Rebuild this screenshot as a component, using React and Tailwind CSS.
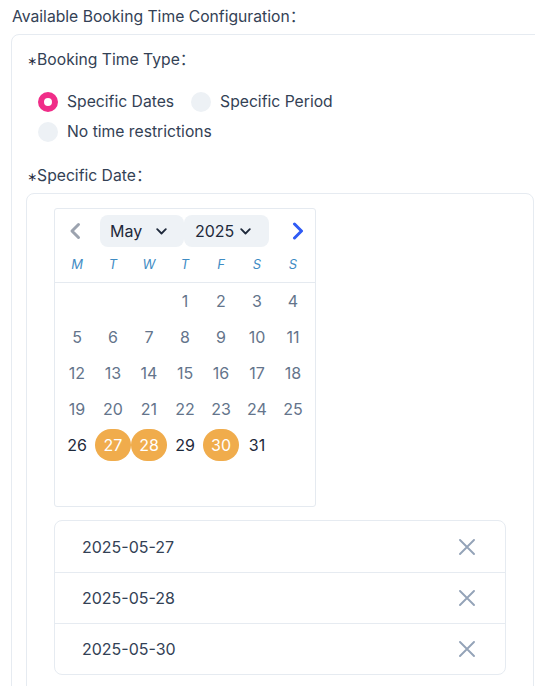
import React from 'react';

const font = { fontFamily: 'Inter, "Noto Sans CJK SC", sans-serif' };

const weeks = [
  [null, null, null, 1, 2, 3, 4],
  [5, 6, 7, 8, 9, 10, 11],
  [12, 13, 14, 15, 16, 17, 18],
  [19, 20, 21, 22, 23, 24, 25],
  [26, 27, 28, 29, 30, 31, null],
  [null, null, null, null, null, null, null],
];

const picked = [27, 28, 30];

const Chevron = ({ dir, className }) => (
  <svg width="12" height="18" viewBox="0 0 12 18" className={className}>
    <path
      d={dir === 'left' ? 'M9.5 2.5 L3 9 L9.5 15.5' : 'M2.5 2 L9.5 9 L2.5 16'}
      fill="none"
      stroke="currentColor"
      strokeWidth="3"
      strokeLinecap="round"
      strokeLinejoin="round"
    />
  </svg>
);

const Caret = () => (
  <svg width="11" height="7" viewBox="0 0 11 7" className="text-[#1e293b]">
    <path d="M1.2 1.2 L5.5 5.5 L9.8 1.2" fill="none" stroke="currentColor" strokeWidth="1.8" strokeLinecap="round" strokeLinejoin="round" />
  </svg>
);

const Close = () => (
  <svg width="16" height="16" viewBox="0 0 16 16" className="text-[#94a3b8]">
    <path d="M1 1 L15 15 M15 1 L1 15" stroke="currentColor" strokeWidth="1.9" strokeLinecap="round" />
  </svg>
);

const Star = () => (
  <span className="font-['DejaVu_Sans'] text-[12px] text-[#1e293b]">∗</span>
);

const Radio = ({ checked, label }) => (
  <label className="flex items-center gap-[9px] h-[30px]">
    {checked ? (
      <span className="w-5 h-5 rounded-full border-[6px] border-[#f02d88] bg-white" />
    ) : (
      <span className="w-5 h-5 rounded-full bg-[#edf1f5]" />
    )}
    <span className="text-[15.7px] text-[#334155]">{label}</span>
  </label>
);

const Calendar = () => (
  <div className="w-[262px] border border-[#e5eaf0] rounded-[3px] px-[4px] pt-[6px] pb-[7px]">
    <div className="flex items-center h-[32px]">
      <div className="w-[41px] pl-[10px] flex">
        <Chevron dir="left" className="text-[#9ca3af]" />
      </div>
      <div className="w-[84px] h-[32px] rounded-[8px] bg-[#eef2f6] flex items-center pl-[10px] pr-[17px] text-[16px] text-[#1e293b]">
        <span>May</span>
        <span className="ml-auto flex"><Caret /></span>
      </div>
      <div className="w-[85px] h-[32px] rounded-[8px] bg-[#eef2f6] flex items-center pl-[11px] pr-[18px] text-[16px] text-[#1e293b]">
        <span>2025</span>
        <span className="ml-auto flex"><Caret /></span>
      </div>
      <div className="ml-[23px] flex">
        <Chevron dir="right" className="text-[#2f5bf5]" />
      </div>
    </div>
    <div className="grid grid-cols-7 h-[35px] items-center">
      {['M', 'T', 'W', 'T', 'F', 'S', 'S'].map((d, i) => (
        <span key={i} className="text-center italic text-[13px] text-[#3f8cc4]">{d}</span>
      ))}
    </div>
    <div className="border-t border-[#e5eaf0] -mx-[4px] px-[4px]">
      {weeks.map((w, wi) => (
        <div key={wi} className="grid grid-cols-7 h-[36px] items-center">
          {w.map((d, di) => {
            if (d === null) return <span key={di} />;
            const sel = picked.includes(d);
            if (sel) {
              return (
                <span key={di} className="h-[32px] rounded-full bg-[#f0ac4c] text-white flex items-center justify-center text-[16px]">
                  {d}
                </span>
              );
            }
            return (
              <span key={di} className={`text-center text-[16px] ${wi === 4 ? 'text-[#1e293b]' : 'text-[#64748b]'}`}>
                {d}
              </span>
            );
          })}
        </div>
      ))}
    </div>
  </div>
);

export default function App() {
  return (
    <div className="w-[535px] h-[686px] overflow-hidden bg-white" style={font}>
      <div className="pl-[12px] pt-[6px] h-[34px] text-[15.7px] text-[#334155] leading-[22px]">
        Available Booking Time Configuration：
      </div>
      <div className="ml-[11px] w-[560px] border border-[#e6ebf1] rounded-[8px] pl-[15px] pt-[14px]">
        <div className="text-[15.7px] text-[#334155] leading-[22px]">
          <Star />Booking Time Type：
        </div>
        <div className="pl-[11px] mt-[15px]">
          <div className="flex gap-[17px]">
            <Radio checked label="Specific Dates" />
            <Radio label="Specific Period" />
          </div>
          <Radio label="No time restrictions" />
        </div>
        <div className="mt-[18px] text-[15.7px] text-[#334155] leading-[22px]">
          <Star />Specific Date：
        </div>
        <div className="mt-[5px] w-[508px] -ml-px border border-[#e6ebf1] rounded-[8px] pl-[27px] pt-[14px] pb-[20px]">
          <Calendar />
          <div className="mt-[13px] w-[452px] border border-[#e6ebf1] rounded-[8px]">
            {['2025-05-27', '2025-05-28', '2025-05-30'].map((d, i) => (
              <div key={d} className={`h-[51px] flex items-center justify-between pl-[27px] pr-[30px] ${i > 0 ? 'border-t border-[#e6ebf1]' : ''}`}>
                <span className="text-[16px] text-[#334155]">{d}</span>
                <Close />
              </div>
            ))}
          </div>
        </div>
      </div>
    </div>
  );
}
